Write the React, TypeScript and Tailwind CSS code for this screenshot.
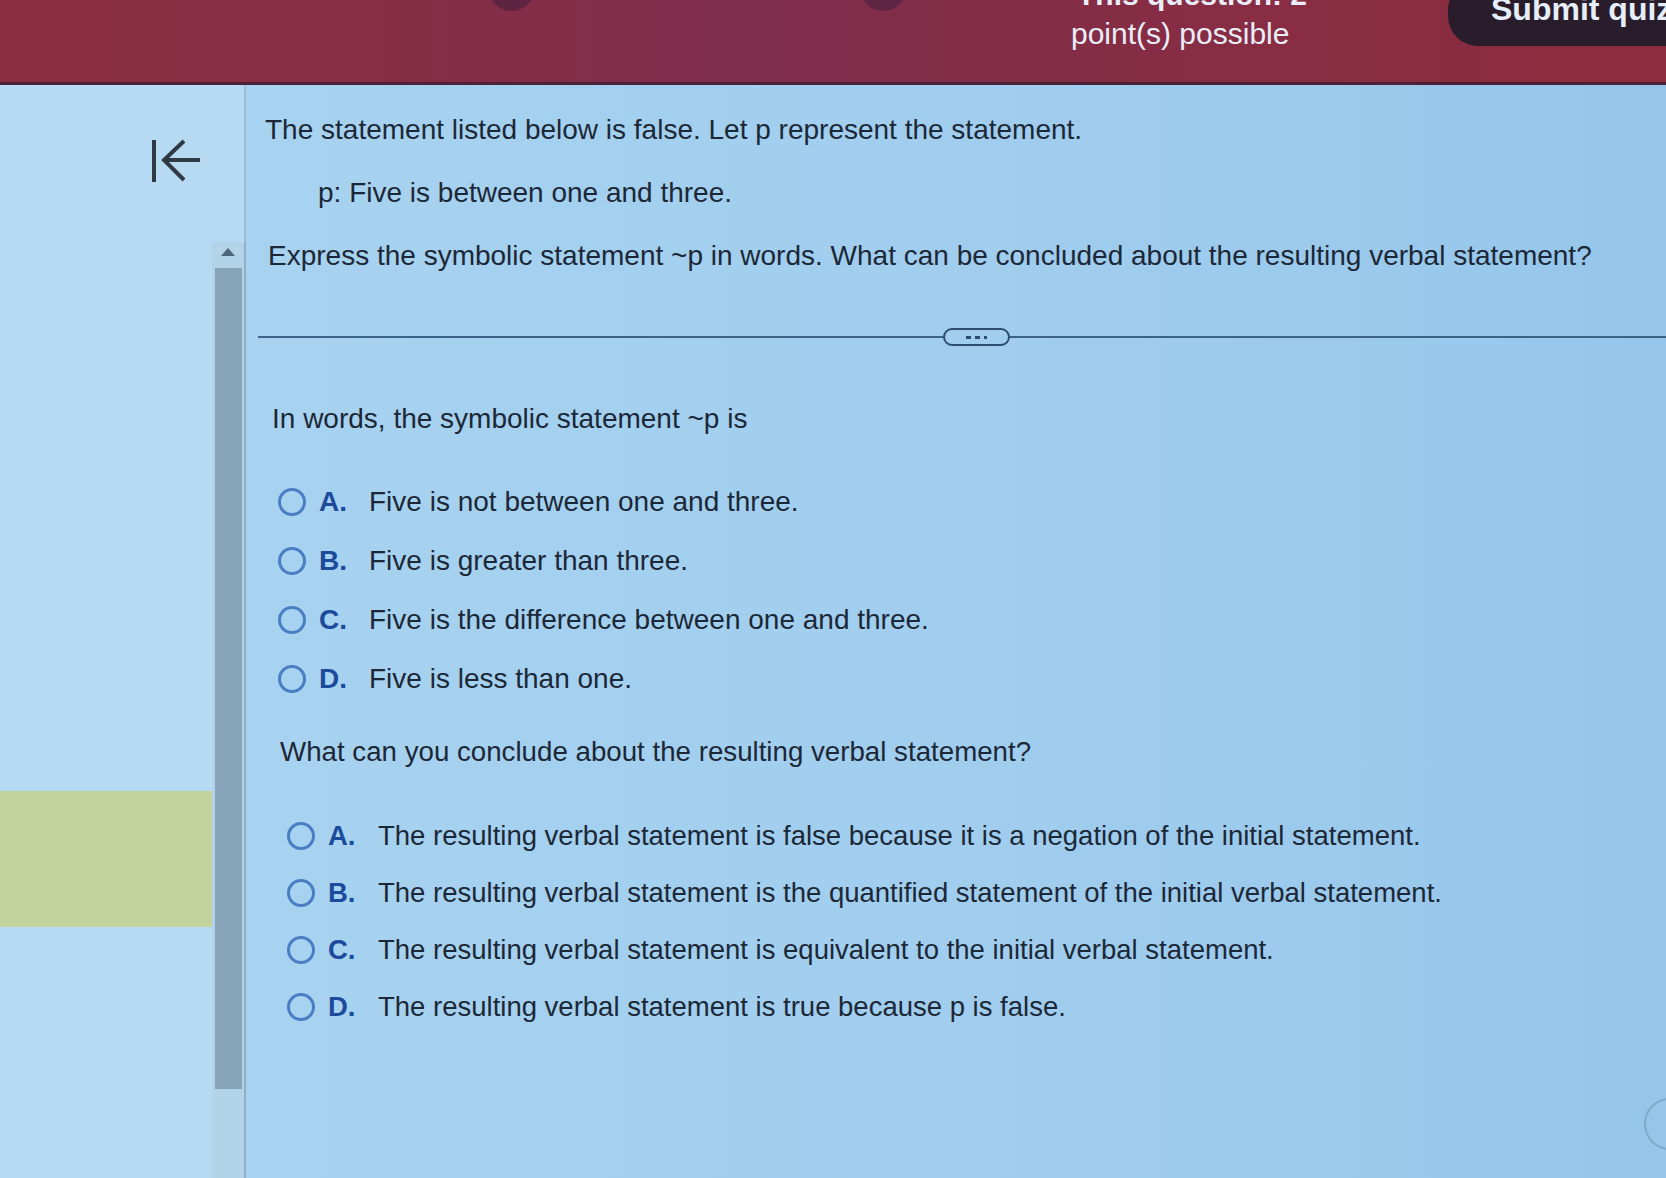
import { ReactNode } from 'react'

const font = { fontFamily: '"Liberation Sans", Arial, sans-serif' }

type Choice = { letter: string; text: string }

const wordChoices: Choice[] = [
  { letter: 'A.', text: 'Five is not between one and three.' },
  { letter: 'B.', text: 'Five is greater than three.' },
  { letter: 'C.', text: 'Five is the difference between one and three.' },
  { letter: 'D.', text: 'Five is less than one.' },
]

const conclusionChoices: Choice[] = [
  { letter: 'A.', text: 'The resulting verbal statement is false because it is a negation of the initial statement.' },
  { letter: 'B.', text: 'The resulting verbal statement is the quantified statement of the initial verbal statement.' },
  { letter: 'C.', text: 'The resulting verbal statement is equivalent to the initial verbal statement.' },
  { letter: 'D.', text: 'The resulting verbal statement is true because p is false.' },
]

export default function App() {
  return (
    <div style={font} className="relative flex h-[1178px] w-[1666px] flex-col overflow-hidden bg-[#a2cfee] text-[#1c2837]">
      <Header />

      <div className="flex flex-1">
        {/* left rail */}
        <aside className="flex w-[212px] flex-col bg-[#b5daf1]">
          <div className="mt-[53px] flex justify-end pr-[10px]">
            <BackIcon />
          </div>
          <div className="mt-[607px] h-[136px] w-[212px] bg-[#c3d29c]" />
        </aside>

        {/* scrollbar column */}
        <div className="flex w-[34px] flex-col">
          <div className="h-[157px] border-r-2 border-[#9fbdd2] bg-[#b5daf1]" />
          <div className="flex flex-1 flex-col items-center border-r-2 border-[#8fb1c8] bg-[#b3d3e8]">
            <div className="mt-[6px] h-0 w-0 border-x-[7px] border-b-[8px] border-x-transparent border-b-[#4d6578]" />
            <div className="mt-[12px] h-[821px] w-[27px] bg-[#86a3b8]" />
          </div>
        </div>

        <Main />
      </div>

      {/* help bubble peeking in at the bottom right */}
      <div className="absolute right-[-30px] top-[1098px] h-[52px] w-[52px] rounded-full border-2 border-[#7fa9c9]" />
    </div>
  )
}

function Header() {
  return (
    <header className="relative h-[85px] shrink-0 overflow-hidden border-b-[3px] border-[#4c2036] bg-[linear-gradient(90deg,#8b2d41_0%,#862d46_25%,#7f2e4d_45%,#852d46_65%,#8d2c3e_100%)]">
      <div className="absolute left-[488px] top-[-36px] h-[47px] w-[47px] rounded-full bg-[#5e2442]" />
      <div className="absolute left-[860px] top-[-36px] h-[47px] w-[47px] rounded-full bg-[#602542]" />

      <div className="absolute left-[1077px] top-[-20px] text-[30px] font-bold leading-[30px] text-[#e8eef8]">
        This question: 2
      </div>
      <div className="absolute left-[1071px] top-[16px] text-[30px] leading-[36px] text-[#e8eef8]">
        point(s) possible
      </div>

      <div className="absolute left-[1448px] top-[-20px] h-[66px] w-[260px] rounded-bl-[30px] rounded-tl-[30px] bg-[#2a1d2b] pl-[43px] pt-[13px] text-[32px] font-bold leading-[32px] text-[#e6eef9]">
        Submit quiz
      </div>
    </header>
  )
}

function Main() {
  return (
    <main className="flex flex-1 flex-col bg-[linear-gradient(90deg,#a7d3f0_0%,#a0cdee_55%,#95c6ea_100%)] text-[28px] leading-[32px]">
      <p className="ml-[19px] mt-[29px]">The statement listed below is false. Let p represent the statement.</p>
      <p className="ml-[72px] mt-[31px]">p: Five is between one and three.</p>
      <p className="ml-[22px] mt-[31px]">
        Express the symbolic statement ~p in words. What can be concluded about the resulting verbal statement?
      </p>

      <div className="ml-[12px] mt-[56px] flex items-center">
        <div className="h-[2px] w-[685px] bg-[#3c6385]" />
        <div className="flex h-[18px] w-[67px] items-center justify-center gap-[4px] rounded-full border-2 border-[#2d4c6e]">
          <span className="h-[3px] w-[5px] bg-[#2d4c6e]" />
          <span className="h-[3px] w-[5px] bg-[#2d4c6e]" />
          <span className="h-[3px] w-[3px] bg-[#2d4c6e]" />
        </div>
        <div className="h-[2px] flex-1 bg-[#3c6385]" />
      </div>

      <p className="ml-[26px] mt-[57px]">In words, the symbolic statement ~p is</p>

      <ChoiceList className="ml-[32px] mt-[51px] gap-[27px]" choices={wordChoices} />

      <p className="ml-[34px] mt-[41px] text-[27.7px]">What can you conclude about the resulting verbal statement?</p>

      <ChoiceList className="ml-[41px] mt-[52px] gap-[25px] text-[27.5px]" choices={conclusionChoices} />
    </main>
  )
}

function ChoiceList({ choices, className }: { choices: Choice[]; className: string }) {
  return (
    <div className={`flex flex-col ${className}`}>
      {choices.map((c) => (
        <Row key={c.letter} letter={c.letter}>
          {c.text}
        </Row>
      ))}
    </div>
  )
}

function Row({ letter, children }: { letter: string; children: ReactNode }) {
  return (
    <label className="flex h-[32px] items-center">
      <span className="h-[28px] w-[28px] shrink-0 rounded-full border-[3px] border-[#4a7ec4]" />
      <span className="ml-[13px] w-[50px] shrink-0 font-bold text-[#1d4b9c]">{letter}</span>
      <span>{children}</span>
    </label>
  )
}

function BackIcon() {
  return (
    <svg width="52" height="46" viewBox="0 0 52 46" fill="none" stroke="#303a46" strokeWidth="4" strokeLinecap="butt">
      <line x1="4" y1="2" x2="4" y2="44" />
      <line x1="14" y1="22" x2="50" y2="22" />
      <polyline points="34,3 14,22 34,42" strokeLinejoin="miter" />
    </svg>
  )
}
